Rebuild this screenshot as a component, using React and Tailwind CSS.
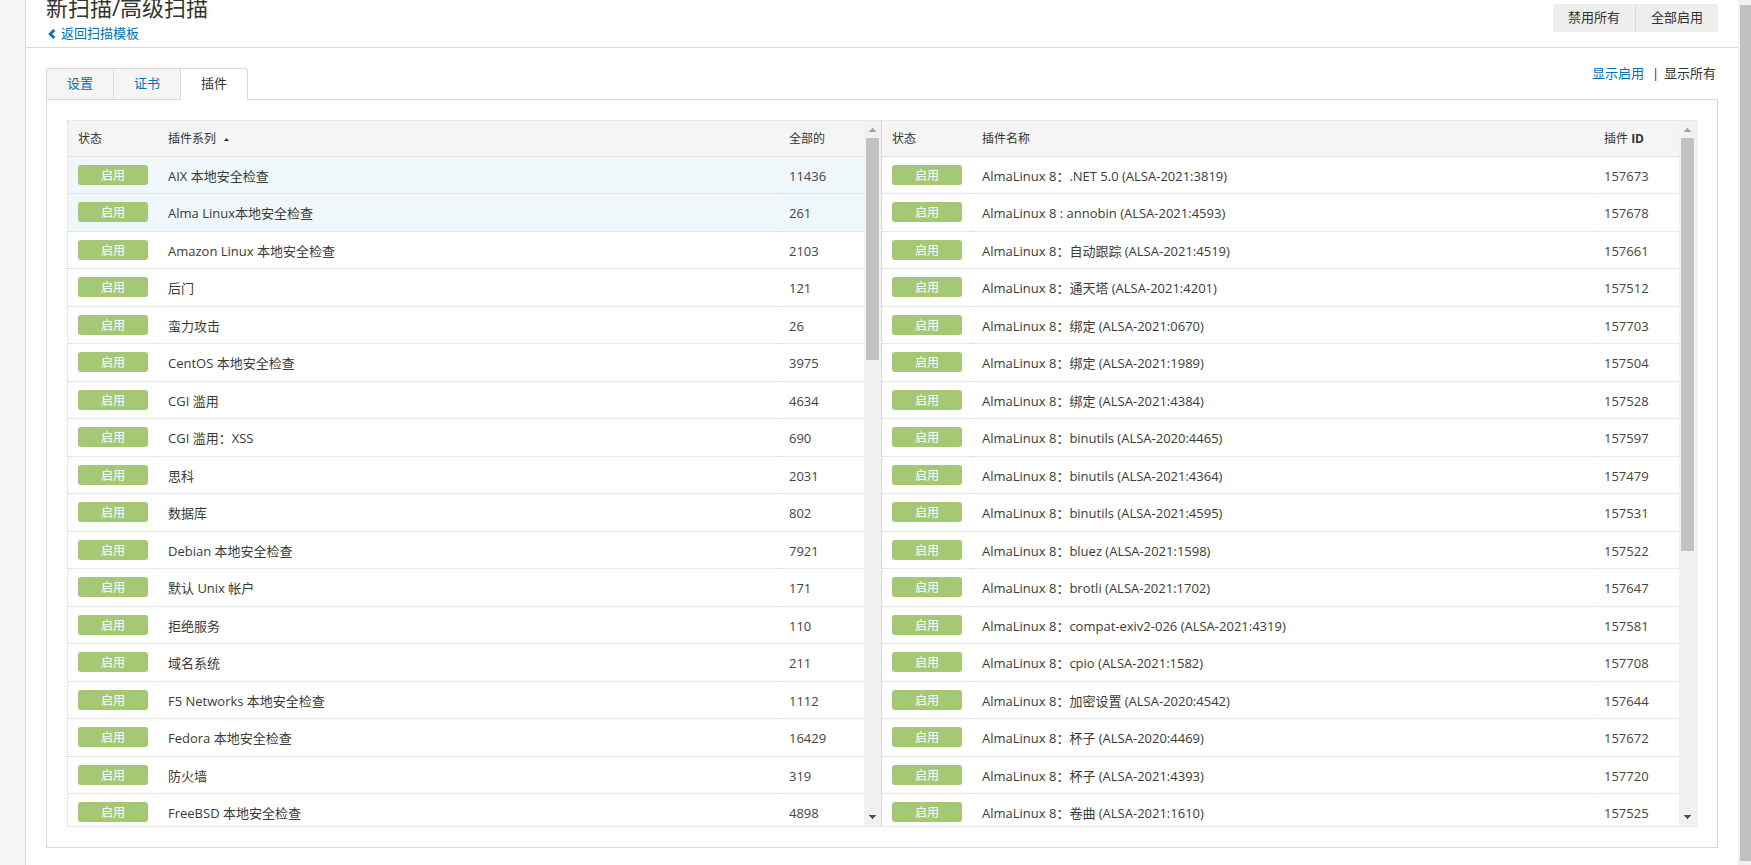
import { useState } from "react";

const FAMILIES = [
  ["AIX 本地安全检查", 11436],
  ["Alma Linux本地安全检查", 261],
  ["Amazon Linux 本地安全检查", 2103],
  ["后门", 121],
  ["蛮力攻击", 26],
  ["CentOS 本地安全检查", 3975],
  ["CGI 滥用", 4634],
  ["CGI 滥用：XSS", 690],
  ["思科", 2031],
  ["数据库", 802],
  ["Debian 本地安全检查", 7921],
  ["默认 Unix 帐户", 171],
  ["拒绝服务", 110],
  ["域名系统", 211],
  ["F5 Networks 本地安全检查", 1112],
  ["Fedora 本地安全检查", 16429],
  ["防火墙", 319],
  ["FreeBSD 本地安全检查", 4898],
];

const PLUGINS = [
  ["AlmaLinux 8：.NET 5.0 (ALSA-2021:3819)", 157673],
  ["AlmaLinux 8 : annobin (ALSA-2021:4593)", 157678],
  ["AlmaLinux 8：自动跟踪 (ALSA-2021:4519)", 157661],
  ["AlmaLinux 8：通天塔 (ALSA-2021:4201)", 157512],
  ["AlmaLinux 8：绑定 (ALSA-2021:0670)", 157703],
  ["AlmaLinux 8：绑定 (ALSA-2021:1989)", 157504],
  ["AlmaLinux 8：绑定 (ALSA-2021:4384)", 157528],
  ["AlmaLinux 8：binutils (ALSA-2020:4465)", 157597],
  ["AlmaLinux 8：binutils (ALSA-2021:4364)", 157479],
  ["AlmaLinux 8：binutils (ALSA-2021:4595)", 157531],
  ["AlmaLinux 8：bluez (ALSA-2021:1598)", 157522],
  ["AlmaLinux 8：brotli (ALSA-2021:1702)", 157647],
  ["AlmaLinux 8：compat-exiv2-026 (ALSA-2021:4319)", 157581],
  ["AlmaLinux 8：cpio (ALSA-2021:1582)", 157708],
  ["AlmaLinux 8：加密设置 (ALSA-2020:4542)", 157644],
  ["AlmaLinux 8：杯子 (ALSA-2020:4469)", 157672],
  ["AlmaLinux 8：杯子 (ALSA-2021:4393)", 157720],
  ["AlmaLinux 8：卷曲 (ALSA-2021:1610)", 157525],
];

function ScrollBar({ thumb }) {
  return (
    <div className="flex w-[17px] shrink-0 flex-col items-center bg-[#f1f1f1]" aria-hidden="true">
      <svg className="h-[17px] w-[17px] shrink-0" viewBox="0 0 17 17" shapeRendering="crispEdges">
        <path d="M5 11h7v-1h-1v-1h-1v-1h-1v-1h-1v1h-1v1h-1v1h-1z" fill="#a3a3a3" />
      </svg>
      <div className="w-[13px] bg-[#c1c1c1]" style={{ height: thumb }} />
      <svg className="mt-auto h-[17px] w-[17px] shrink-0" viewBox="0 0 17 17" shapeRendering="crispEdges">
        <path d="M5 6h7v1h-1v1h-1v1h-1v1h-1v-1h-1v-1h-1v-1h-1z" fill="#505050" />
      </svg>
    </div>
  );
}

function PluginTable({ headers, rows, highlighted = 0, sorted = false }) {
  const head = "h-[36px] border-b border-dotted border-[#d5d5d5] bg-[#f5f5f5] pl-[10px] text-left text-xs";
  const cell = "border-b border-dotted border-[#d5d5d5] pl-[10px] align-top";
  return (
    <table className="min-w-0 flex-1 table-fixed border-separate border-spacing-0 self-start">
      <thead>
        <tr>
          <th className={head + " w-[90px] font-normal"}>{headers[0]}</th>
          <th className={head + " font-normal"}>
            <span className="flex items-center gap-2">
              {headers[1]}
              {sorted && (
                <svg className="mt-px h-[3px] w-[5px]" viewBox="0 0 5 3" aria-hidden="true">
                  <path d="M0 3L2.5 0L5 3z" fill="#333" />
                </svg>
              )}
            </span>
          </th>
          <th className={head + " w-[85px] font-bold"}>
            <span className="font-normal">{headers[2]}</span>
            {headers[3] && " " + headers[3]}
          </th>
        </tr>
      </thead>
      <tbody>
        {rows.map(([name, value], i) => (
          <tr key={value} className={"odd:h-[37px] even:h-[38px] " + (i < highlighted ? "bg-[#eff7fb]" : "bg-white")}>
            <td className={cell + " pt-2"}>
              <button
                type="button"
                className="block h-[20px] w-[70px] rounded-[3px] bg-[#a4c874] pt-px text-center text-xs text-white"
              >
                启用
              </button>
            </td>
            <td className={cell + " truncate pt-[9px] leading-5 text-[#3a3a3a]"}>{name}</td>
            <td className={cell + " pt-[9px] leading-5 text-[#444]"}>{value}</td>
          </tr>
        ))}
      </tbody>
    </table>
  );
}

const TABS = ["设置", "证书", "插件"];

export default function App() {
  const [active, setActive] = useState("插件");
  return (
    <div className="flex h-screen overflow-hidden bg-white font-['Open_Sans','Noto_Sans_CJK_SC',sans-serif] text-[13px] text-[#333]">
      <div className="w-[26px] shrink-0 border-r border-[#d9d9d9] bg-[#f5f5f5]" />

      <div className="min-w-0 flex-1">
        <header className="flex h-[48px] justify-between border-b border-[#d9d9d9] px-5">
          <div className="flex flex-col justify-end pb-1">
            <h1 className="text-[22px] leading-8 text-[#333]">新扫描/高级扫描</h1>
            <a href="#templates" className="flex items-center gap-[5px] pl-[2px] leading-5 text-[#0071b9]">
              <svg className="mt-px h-[10px] w-[8px]" viewBox="0 0 8 10" aria-hidden="true">
                <path d="M6.2 1L2.2 5L6.2 9" fill="none" stroke="#0071b9" strokeWidth="2.8" />
              </svg>
              返回扫描模板
            </a>
          </div>
          <div className="mt-1 flex h-[28px] overflow-hidden rounded-[3px] bg-[#eee]">
            <button type="button" className="border-r border-[#d9d9d9] px-[15px]">禁用所有</button>
            <button type="button" className="px-[15px]">全部启用</button>
          </div>
        </header>

        <main className="px-5 pt-5">
          <div className="flex justify-between">
            <div role="tablist" className="relative z-10 -mb-px flex">
              {TABS.map((tab) => (
                <button
                  key={tab}
                  type="button"
                  role="tab"
                  aria-selected={tab === active}
                  onClick={() => setActive(tab)}
                  className={
                    "h-[32px] border-y border-l border-[#d9d9d9] px-5 first:rounded-tl-[3px] last:rounded-tr-[3px] last:border-r " +
                    (tab === active ? "border-b-white bg-white text-[#333]" : "bg-[#f5f5f5] text-[#0071b9]")
                  }
                >
                  {tab}
                </button>
              ))}
            </div>
            <div className="flex h-3 items-center gap-2 pr-[2px]">
              <a href="#enabled" className="text-[#0071b9]">显示启用</a>
              <span className="w-1 text-center">|</span>
              <a href="#all">显示所有</a>
            </div>
          </div>

          <section className="border border-[#d9d9d9] p-5">
            <div className="grid grid-cols-2 border border-dotted border-[#d5d5d5]">
              <div className="flex h-[705px] min-w-0 overflow-hidden border-r border-[#d9d9d9]">
                <PluginTable headers={["状态", "插件系列", "全部的"]} rows={FAMILIES} highlighted={2} sorted />
                <ScrollBar thumb={222} />
              </div>
              <div className="flex h-[705px] min-w-0 overflow-hidden">
                <PluginTable headers={["状态", "插件名称", "插件", "ID"]} rows={PLUGINS} />
                <ScrollBar thumb={413} />
              </div>
            </div>
          </section>
        </main>
      </div>

      <div className="w-[13px] shrink-0 bg-[#f1f1f1] pt-[5px] pb-1 pl-[2px]" aria-hidden="true">
        <div className="h-full bg-[#c1c1c1]" />
      </div>
    </div>
  );
}
